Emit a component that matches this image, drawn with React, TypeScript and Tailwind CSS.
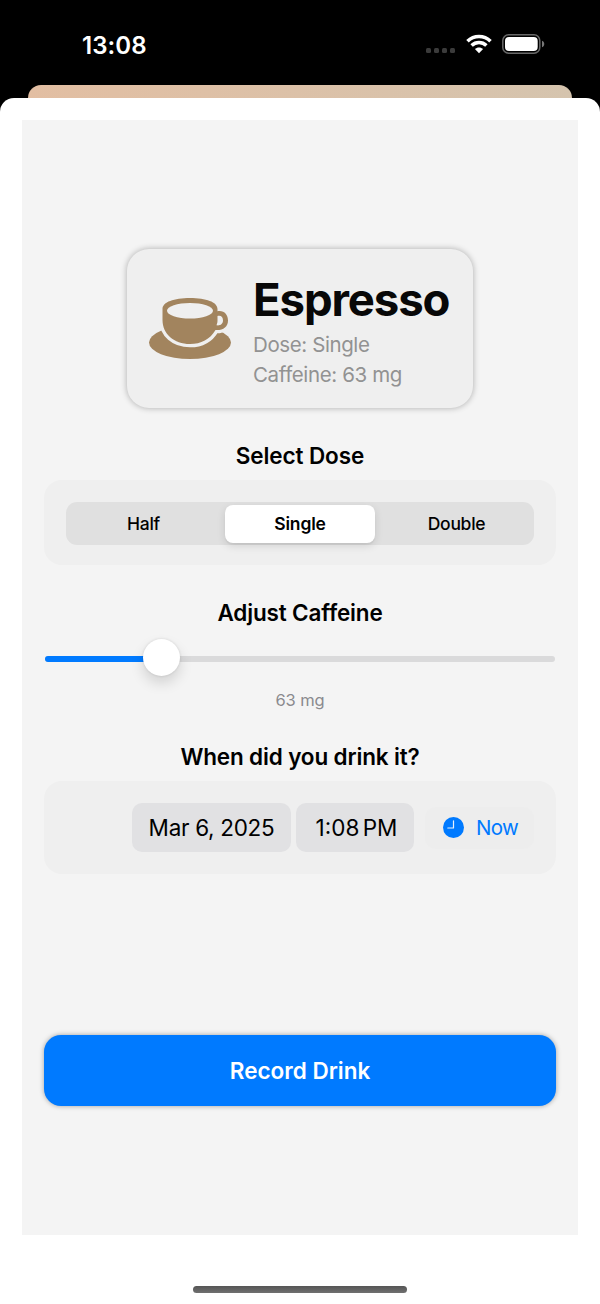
import { useState } from 'react'

const DOSES = ['Half', 'Single', 'Double']
const MAX_CAFFEINE = 300

function StatusBar() {
  return (
    <header className="flex h-[85px] items-start justify-between pl-[82px] pr-[55px] text-white">
      <span className="mt-[30px] text-2xl leading-8 font-semibold tracking-[0.1px] whitespace-nowrap">13:08</span>
      <div className="mt-[34px] flex items-center">
        <div className="mt-[13px] flex gap-[3px]">
          <i className="size-[5px] rounded-[1.5px] bg-[#3b3b3b]" />
          <i className="size-[5px] rounded-[1.5px] bg-[#3b3b3b]" />
          <i className="size-[5px] rounded-[1.5px] bg-[#3b3b3b]" />
          <i className="size-[5px] rounded-[1.5px] bg-[#3b3b3b]" />
        </div>
        <svg className="ml-[11px]" width="26" height="20" viewBox="0 0 26 20" fill="none">
          <path d="M1.5 7.2C8 .9 18 .9 24.5 7.2" stroke="white" strokeWidth="3.6" />
          <path d="M5.6 11.6C9.8 7.6 16.2 7.6 20.4 11.6" stroke="white" strokeWidth="3.5" />
          <path d="M13 19.2 8.9 15.1C11.2 13 14.8 13 17.1 15.1Z" fill="white" />
        </svg>
        <svg className="ml-[10px]" width="43" height="20" viewBox="0 0 43 20">
          <rect x=".8" y=".8" width="37" height="18.4" rx="5.8" fill="none" stroke="#686868" strokeWidth="1.5" />
          <rect x="3" y="3" width="32.7" height="14" rx="4" fill="white" />
          <path d="M40 6.8c3 .8 3 5.6 0 6.4Z" fill="#777" />
        </svg>
      </div>
    </header>
  )
}

const CUP =
  'M13.5 11C13.5 4 25 0 41 0s27.500 4 27.500 11v2.200C75 12 79 16.500 79 22.500c0 6.500-5 10-12.500 9.500C61 41.500 52 46 41 46 25 46 13.500 36 13.500 22Z'

function CupIcon() {
  return (
    <svg className="shrink-0" width="82" height="62" viewBox="0 0 82 62">
      <ellipse cx="41" cy="44.5" rx="41" ry="16.5" fill="#a2845e" />
      {/* outlined in the card colour to cut the cup out of the saucer */}
      <path d={CUP} fill="#a2845e" stroke="#efefef" strokeWidth="6.5" />
      <path d={CUP} fill="#a2845e" />
      <ellipse cx="41" cy="12.8" rx="23" ry="7.8" fill="#efefef" />
      <path d="M68.5 18c3.6-.8 5.5 1.1 5.5 4.500s-2.600 5.400-6.500 4.800c.8-2 1-3.300 1-5Z" fill="#efefef" />
    </svg>
  )
}

function DrinkCard({ dose, caffeine }: { dose: string; caffeine: number }) {
  return (
    <section className="mx-auto mt-[129px] flex h-[159px] w-[346px] items-center rounded-[22px] bg-[#efefef] pl-[22px] shadow-[0_0_6px_rgba(0,0,0,0.3)]">
      <CupIcon />
      <div className="mt-[7px] ml-[22px] whitespace-nowrap">
        <h1 className="h-[52px] text-[45.5px] leading-[52px] font-bold tracking-[-1.1px] text-[#080808]">Espresso</h1>
        <p className="mt-1 h-[30px] text-[20.5px] leading-[30px] tracking-[-0.4px] text-[#929292]">Dose: {dose}</p>
        <p className="h-[30px] text-[20.5px] leading-[30px] tracking-[-0.38px] text-[#929292]">
          Caffeine: {caffeine} mg
        </p>
      </div>
    </section>
  )
}

function DosePicker({ value, onChange }: { value: string; onChange: (dose: string) => void }) {
  return (
    <div className="mt-[9px] h-[85px] rounded-[18px] bg-[#efefef] px-[22px] pt-[22px]">
      <div className="grid h-[43px] grid-cols-[155px_158px_155px] items-center rounded-[11px] bg-[#e0e0e0]">
        {DOSES.map((dose) => (
          <button
            key={dose}
            onClick={() => onChange(dose)}
            className={
              dose === value
                ? 'mx-1 h-[38px] rounded-lg bg-white pt-px text-[17.5px] font-semibold tracking-[-0.15px] shadow-[0_3px_8px_rgba(0,0,0,0.12),0_2px_1px_rgba(0,0,0,0.04)]'
                : 'h-[38px] pt-px text-[17.5px] font-medium tracking-[-0.3px]'
            }
          >
            {dose}
          </button>
        ))}
      </div>
    </div>
  )
}

function CaffeineSlider({ value }: { value: number }) {
  // the thumb stays inside the track, so its travel is the width less the thumb
  const left = (value / MAX_CAFFEINE) * (512 - 37) - 1
  return (
    <div className="relative mt-[11px] flex h-[37px] items-center px-px">
      <div className="mt-[3px] h-[6px] w-full overflow-hidden rounded-full bg-[#dadadb]">
        <div className="h-full bg-[#007aff]" style={{ width: left + 18 }} />
      </div>
      <div
        className="absolute top-0 size-[37px] rounded-full bg-white shadow-[0_7px_14px_rgba(0,0,0,0.14),0_0_3px_rgba(0,0,0,0.12)]"
        style={{ left }}
      />
    </div>
  )
}

function TimeRow({ onNow }: { onNow: () => void }) {
  return (
    <div className="mt-[9px] flex h-[93px] items-center justify-end rounded-[18px] bg-[#efefef] pr-[22px] whitespace-nowrap">
      <button className="h-[49px] w-[159px] rounded-[10px] bg-[#e1e1e3] pt-px text-[22.5px] tracking-[-0.3px]">
        Mar 6, 2025
      </button>
      <button className="ml-[5px] h-[49px] w-[118px] rounded-[10px] bg-[#e1e1e3] pt-px pl-[3px] text-[22.5px] [word-spacing:-3px]">
        1:08 PM
      </button>
      <button
        onClick={onNow}
        className="ml-[11px] flex h-[42px] w-[109px] items-center rounded-[11px] bg-[#ededed] pl-[18px] text-[20.5px] tracking-[-0.7px] text-[#007aff]"
      >
        <svg width="21" height="21" viewBox="0 0 21 21">
          <circle cx="10.5" cy="10.5" r="10.5" fill="#007aff" />
          <path
            d="M10.5 3.8v7.2H4.8"
            fill="none"
            stroke="#e8f0fa"
            strokeWidth="1.2"
            strokeLinecap="round"
            strokeLinejoin="round"
          />
        </svg>
        <span className="mt-0.5 ml-[12px]">Now</span>
      </button>
    </div>
  )
}

export default function App() {
  const [dose, setDose] = useState('Single')
  const [caffeine] = useState(63)

  return (
    <div className="flex h-[1304px] w-[600px] flex-col overflow-hidden bg-black font-['Inter','Liberation_Sans',sans-serif] text-black">
      <StatusBar />
      {/* edge of the screen below the sheet */}
      <div className="mx-7 h-[30px] shrink-0 rounded-t-[13px] bg-linear-to-r from-[#e2bea2] to-[#d5c4ae]" />
      <div className="relative -mt-[17px] flex flex-1 flex-col rounded-t-[14px] bg-white px-[22px] pt-[22px]">
        <main className="h-[1115px] bg-[#f4f4f4] px-[22px]">
          <div className="flex flex-col">
            <DrinkCard dose={dose} caffeine={caffeine} />
            <h2 className="mt-[33px] text-center text-[22.5px] leading-[30px] font-semibold tracking-[-0.1px]">
              Select Dose
            </h2>
            <DosePicker value={dose} onChange={setDose} />
            <h2 className="mt-[33px] text-center text-[22.5px] leading-[30px] font-semibold tracking-[-0.15px]">
              Adjust Caffeine
            </h2>
            <CaffeineSlider value={caffeine} />
            <p className="mt-[14px] text-center text-[16.5px] leading-[20px] tracking-[-0.1px] text-[#8a8a8e]">
              {caffeine} mg
            </p>
            <h2 className="mt-[32px] text-center text-[22.5px] leading-[30px] font-semibold tracking-[-0.15px]">
              When did you drink it?
            </h2>
            <TimeRow onNow={() => {}} />
            <button className="mt-[161px] h-[71px] rounded-[17px] bg-[#007aff] text-[22.5px] font-semibold text-white shadow-[0_0_5px_rgba(0,0,0,0.35)]">
              Record Drink
            </button>
          </div>
        </main>
        <div className="mx-auto mt-[51px] h-[7px] w-[214px] rounded-full bg-linear-to-b from-[#555] to-[#707070]" />
      </div>
    </div>
  )
}
